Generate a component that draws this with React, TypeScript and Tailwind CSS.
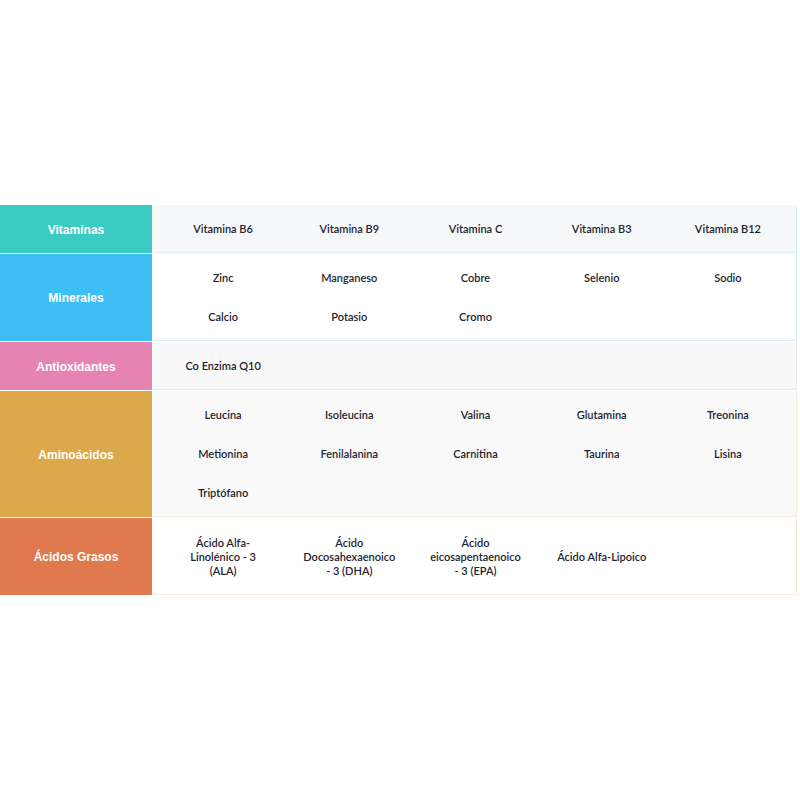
import React from 'react'

type Group = {
  label: string
  labelBg: string
  cellBg: string
  line: string
  items: React.ReactNode[]
  tall?: boolean
}

const groups: Group[] = [
  {
    label: 'Vitaminas',
    labelBg: 'bg-[#3ccbc3]',
    cellBg: 'bg-[#f7f8f9]',
    line: 'border-[#d8eff1]',
    items: ['Vitamina B6', 'Vitamina B9', 'Vitamina C', 'Vitamina B3', 'Vitamina B12'],
  },
  {
    label: 'Minerales',
    labelBg: 'bg-[#3dbff4]',
    cellBg: 'bg-white',
    line: 'border-[#dcecf4]',
    items: ['Zinc', 'Manganeso', 'Cobre', 'Selenio', 'Sodio', 'Calcio', 'Potasio', 'Cromo'],
  },
  {
    label: 'Antioxidantes',
    labelBg: 'bg-[#e583b3]',
    cellBg: 'bg-[#f8f8f9]',
    line: 'border-[#f7e3ea]',
    items: ['Co Enzima Q10'],
  },
  {
    label: 'Aminoácidos',
    labelBg: 'bg-[#dca84a]',
    cellBg: 'bg-[#f9f9f9]',
    line: 'border-[#f1ebe0]',
    items: [
      'Leucina', 'Isoleucina', 'Valina', 'Glutamina', 'Treonina',
      'Metionina', 'Fenilalanina', 'Carnitina', 'Taurina', 'Lisina',
      'Triptófano',
    ],
  },
  {
    label: 'Ácidos Grasos',
    labelBg: 'bg-[#e07a4e]',
    cellBg: 'bg-white',
    line: 'border-[#f7ebe2]',
    tall: true,
    items: [
      <>Ácido Alfa-<br />Linolénico - 3<br />(ALA)</>,
      <>Ácido<br />Docosahexaenoico<br />- 3 (DHA)</>,
      <>Ácido<br />eicosapentaenoico<br />- 3 (EPA)</>,
      'Ácido Alfa-Lipoico',
    ],
  },
]

export default function App() {
  return (
    <div className="w-[800px] h-[800px] bg-white pt-[205px]">
      <div className="flex flex-col pr-[3px]">
        {groups.map((g, i) => (
          <div key={g.label} className={`flex ${i > 0 ? 'border-t border-white' : ''}`}>
            {/* Category label */}
            <div
              className={`w-[152px] shrink-0 flex items-center justify-center pt-[1px] ${g.labelBg} text-white text-[12px] font-bold`}
              style={{ fontFamily: '"Liberation Sans", Arial, sans-serif' }}
            >
              {g.label}
            </div>
            <div className="w-[1px] bg-white shrink-0" />
            {/* Items */}
            <div
              className={`flex-1 grid grid-cols-5 pl-[7px] pr-[5px] ${g.tall ? 'pt-[11px] pb-[10px]' : 'pt-[5px] pb-[3px]'} ${g.cellBg} border-b border-r ${g.line} text-[#1f2430] text-[11px] font-semibold`}
              style={{ fontFamily: 'Lato, "Open Sans", sans-serif' }}
            >
              {g.items.map((item, j) => (
                <div
                  key={j}
                  className={`flex items-center justify-center text-center ${g.tall ? 'h-[55px] leading-[14px]' : 'h-[39px]'}`}
                >
                  <span>{item}</span>
                </div>
              ))}
            </div>
          </div>
        ))}
      </div>
    </div>
  )
}
